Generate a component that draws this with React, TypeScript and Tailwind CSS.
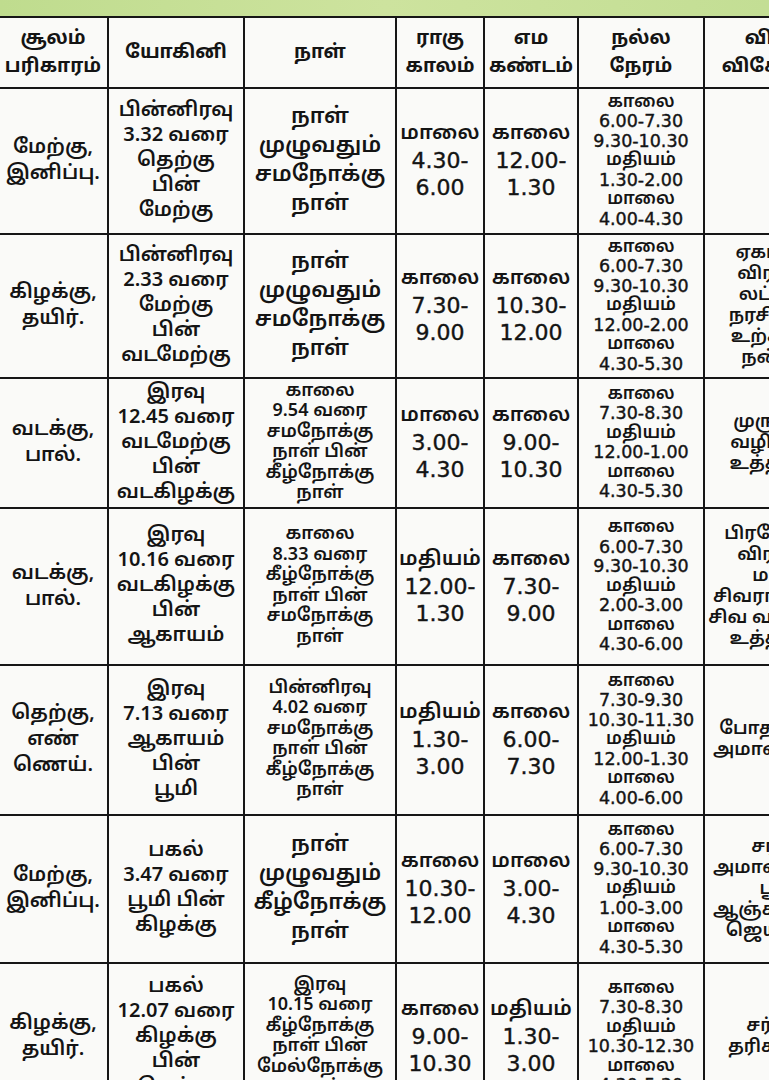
const FONT = "font-['Noto_Sans_Tamil','Lohit_Tamil','Noto_Sans',sans-serif]";
const DIGITS = "font-['DejaVu_Sans','Noto_Sans_Tamil',sans-serif] font-normal [-webkit-text-stroke:0.4px_#141414]";

type Cell = string[];

const header: Cell[] = [
  ["சூலம்", "பரிகாரம்"],
  ["யோகினி"],
  ["நாள்"],
  ["ராகு", "காலம்"],
  ["எம", "கண்டம்"],
  ["நல்ல", "நேரம்"],
  ["விழா", "விசேஷம்"],
];

const rows: { h: string; cells: Cell[] }[] = [
  {
    h: "h-[146px]",
    cells: [
      ["மேற்கு,", "இனிப்பு."],
      ["பின்னிரவு", "3.32 வரை", "தெற்கு", "பின்", "மேற்கு"],
      ["நாள்", "முழுவதும்", "சமநோக்கு", "நாள்"],
      ["மாலை", "4.30-", "6.00"],
      ["காலை", "12.00-", "1.30"],
      ["காலை", "6.00-7.30", "9.30-10.30", "மதியம்", "1.30-2.00", "மாலை", "4.00-4.30"],
      [],
    ],
  },
  {
    h: "h-[144px]",
    cells: [
      ["கிழக்கு,", "தயிர்."],
      ["பின்னிரவு", "2.33 வரை", "மேற்கு", "பின்", "வடமேற்கு"],
      ["நாள்", "முழுவதும்", "சமநோக்கு", "நாள்"],
      ["காலை", "7.30-", "9.00"],
      ["காலை", "10.30-", "12.00"],
      ["காலை", "6.00-7.30", "9.30-10.30", "மதியம்", "12.00-2.00", "மாலை", "4.30-5.30"],
      ["ஏகாதசி", "விரதம்.", "லட்சுமி", "நரசிம்மர்", "உற்சவம்", "நன்று."],
    ],
  },
  {
    h: "h-[130px]",
    cells: [
      ["வடக்கு,", "பால்."],
      ["இரவு", "12.45 வரை", "வடமேற்கு", "பின்", "வடகிழக்கு"],
      ["காலை", "9.54 வரை", "சமநோக்கு", "நாள் பின்", "கீழ்நோக்கு", "நாள்"],
      ["மாலை", "3.00-", "4.30"],
      ["காலை", "9.00-", "10.30"],
      ["காலை", "7.30-8.30", "மதியம்", "12.00-1.00", "மாலை", "4.30-5.30"],
      ["முருகன்", "வழிபாடு", "உத்தமம்."],
    ],
  },
  {
    h: "h-[157px]",
    cells: [
      ["வடக்கு,", "பால்."],
      ["இரவு", "10.16 வரை", "வடகிழக்கு", "பின்", "ஆகாயம்"],
      ["காலை", "8.33 வரை", "கீழ்நோக்கு", "நாள் பின்", "சமநோக்கு", "நாள்"],
      ["மதியம்", "12.00-", "1.30"],
      ["காலை", "7.30-", "9.00"],
      ["காலை", "6.00-7.30", "9.30-10.30", "மதியம்", "2.00-3.00", "மாலை", "4.30-6.00"],
      ["பிரதோஷ", "விரதம்.", "மாத", "சிவராத்திரி.", "சிவ வழிபாடு", "உத்தமம்."],
    ],
  },
  {
    h: "h-[150px]",
    cells: [
      ["தெற்கு,", "எண்", "ணெய்."],
      ["இரவு", "7.13 வரை", "ஆகாயம்", "பின்", "பூமி"],
      ["பின்னிரவு", "4.02 வரை", "சமநோக்கு", "நாள் பின்", "கீழ்நோக்கு", "நாள்"],
      ["மதியம்", "1.30-", "3.00"],
      ["காலை", "6.00-", "7.30"],
      ["காலை", "7.30-9.30", "10.30-11.30", "மதியம்", "12.00-1.30", "மாலை", "4.00-6.00"],
      ["போதாயன", "அமாவாசை."],
    ],
  },
  {
    h: "h-[148px]",
    cells: [
      ["மேற்கு,", "இனிப்பு."],
      ["பகல்", "3.47 வரை", "பூமி பின்", "கிழக்கு"],
      ["நாள்", "முழுவதும்", "கீழ்நோக்கு", "நாள்"],
      ["காலை", "10.30-", "12.00"],
      ["மாலை", "3.00-", "4.30"],
      ["காலை", "6.00-7.30", "9.30-10.30", "மதியம்", "1.00-3.00", "மாலை", "4.30-5.30"],
      ["சர்வ", "அமாவாசை.", "ஸ்ரீ", "ஆஞ்சநேயர்", "ஜெயந்தி."],
    ],
  },
  {
    h: "h-[148px]",
    cells: [
      ["கிழக்கு,", "தயிர்."],
      ["பகல்", "12.07 வரை", "கிழக்கு", "பின்", "தெற்கு"],
      ["இரவு", "10.15 வரை", "கீழ்நோக்கு", "நாள் பின்", "மேல்நோக்கு", "நாள்"],
      ["காலை", "9.00-", "10.30"],
      ["மதியம்", "1.30-", "3.00"],
      ["காலை", "7.30-8.30", "மதியம்", "10.30-12.30", "மாலை", "4.30-5.30"],
      ["சர்ப்ப", "தரிசனம்."],
    ],
  },
];

const widths = ["w-[110px]", "w-[136px]", "w-[152px]", "w-[88px]", "w-[94px]", "w-[126px]", "w-[140px]"];

const isNum = (s: string) => /^[0-9]/.test(s);

// font size per column; the time columns set their figures in a wider face
function lineClass(col: number, line: string, count: number) {
  const num = isNum(line);
  if (col === 0) return "text-[20px] leading-[26px]";
  if (col === 1) return "text-[20px] leading-[25px]";
  if (col === 2) {
    if (count <= 4) return "text-[22px] leading-[29px]";
    return "text-[18px] leading-[20.5px]";
  }
  if (col === 3 || col === 4)
    return num ? `${DIGITS} text-[22px] leading-[27px]` : "text-[20.5px] leading-[26px]";
  if (col === 5)
    return num ? `${DIGITS} text-[17.5px] leading-[19.5px]` : "text-[17.5px] leading-[19.5px]";
  return "text-[18px] leading-[21px]";
}

export default function App() {
  return (
    <div className={`w-[769px] h-[1080px] overflow-hidden bg-[#fafaf8] ${FONT}`}>
      <div className="h-[16px] bg-gradient-to-r from-[#bfdc8e] via-[#cde39e] to-[#c3de94]" />
      <table className="table-fixed border-collapse -ml-[3px] w-[846px] text-[#141414]">
        <colgroup>
          {widths.map((w) => (
            <col key={w} className={w} />
          ))}
        </colgroup>
        <thead>
          <tr className="h-[71px]">
            {header.map((c, i) => (
              <th key={i} className="border-[2.5px] border-[#161616] p-0 align-middle text-center font-bold">
                {c.map((l) => (
                  <div key={l} className="text-[19px] leading-[28px] whitespace-nowrap">
                    {l}
                  </div>
                ))}
              </th>
            ))}
          </tr>
        </thead>
        <tbody>
          {rows.map((r, ri) => (
            <tr key={ri} className={r.h}>
              {r.cells.map((c, ci) => (
                <td key={ci} className="border-[2.5px] border-[#161616] p-0 align-middle text-center font-semibold">
                  {c.map((l, li) => (
                    <div key={li} className={`whitespace-nowrap ${lineClass(ci, l, c.length)}`}>
                      {l}
                    </div>
                  ))}
                </td>
              ))}
            </tr>
          ))}
        </tbody>
      </table>
    </div>
  );
}
